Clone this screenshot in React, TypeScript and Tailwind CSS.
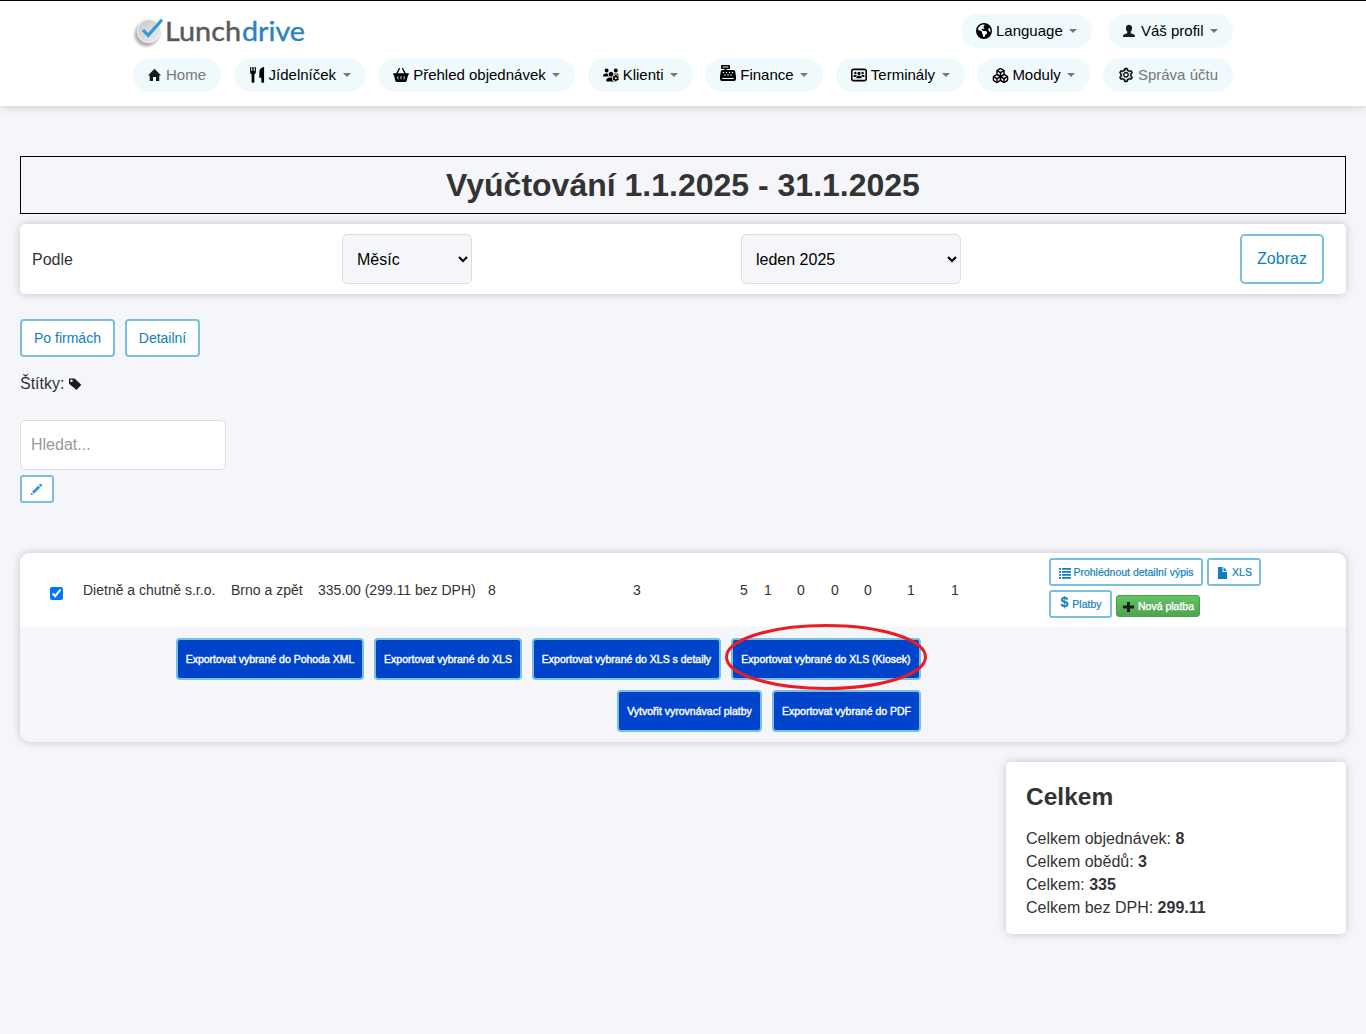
import type { ReactNode } from 'react'
import { Boxes } from 'lucide-react'
import { AiOutlineSetting } from 'react-icons/ai'
import { FaCashRegister, FaEarthAmericas, FaUsersGear, FaUsersRectangle, FaBasketShopping } from 'react-icons/fa6'

type GlyphName = 'home' | 'cutlery' | 'user' | 'tag' | 'pencil' | 'list' | 'file' | 'plus'

// 14x14 grid
const GLYPHS: Record<GlyphName, string> = {
  home: 'M6.500 .8 L13 7.400 H11.300 V13 H8 V9 H5 V13 H1.700 V7.400 H0 Z',
  cutlery:
    'M1 0h1v3.500h.9V0h1.200v3.500H5V0h1v4.200c0 1.200-.6 1.900-1.300 2.200V13c0 .6-.5 1-1.200 1s-1.200-.4-1.200-1V6.400C1.600 6.100 1 5.400 1 4.200z M13.200 0v13c0 .6-.5 1-1.200 1s-1.200-.4-1.200-1V9.500H9V4.600C9 2 10.800 .2 13.200 0z',
  user: 'M7 .8c1.900 0 3.100 1.300 3.100 3.200 0 1.700-.6 2.900-1.300 3.600v1.700l3.200 1.200c.6.200.9.700.9 1.300V13H1.100v-1.200c0-.6.300-1.100.9-1.300l3.200-1.200V7.600C4.500 6.900 3.900 5.700 3.900 4 3.900 2.100 5.100 .8 7 .8z',
  tag: 'M1 1.400h5.600l6.700 6.300-4.700 5.300L1 6.800z M3.500 2.600a1.200 1.200 0 1 0 .01 0z',
  pencil: 'M.6 13.200l.9-3 2.100 2.100z M2.200 9.400l6.700-6.700 2.200 2.200-6.700 6.700z M9.600 2l1-1c.4-.4.900-.4 1.300 0l.9.9c.4.4.4.9 0 1.300l-1 1z',
  list: 'M1 2h2v1.800H1z M4 2h9v1.800H4z M1 5h2v1.800H1z M4 5h9v1.800H4z M1 8h2v1.800H1z M4 8h9v1.800H4z M1 11h2v1.800H1z M4 11h9v1.800H4z',
  file: 'M2 1h4.500v5h4.500v7H2z M7.500 1l3.500 4H7.500z',
  plus: 'M5 2h3v3.500h4v3H8V12H5V8.500H1v-3h4z',
}

function Glyph({ name, className = 'size-3.5' }: { name: GlyphName; className?: string }) {
  return (
    <svg viewBox="0 0 14 14" className={`shrink-0 ${className}`} fill="currentColor" fillRule="evenodd">
      <path d={GLYPHS[name]} />
    </svg>
  )
}

function Logo() {
  return (
    <svg width="176" height="36" viewBox="0 0 176 36" className="block">
      <defs>
        <linearGradient id="disc" x1="0" y1="0" x2="1" y2="1">
          <stop offset="0" stopColor="#c9c9cb" />
          <stop offset="1" stopColor="#ececee" />
        </linearGradient>
        <filter id="soft" x="-30%" y="-30%" width="160%" height="160%">
          <feGaussianBlur stdDeviation="1.500" />
        </filter>
      </defs>
      <circle cx="13.500" cy="20.500" r="11.800" fill="#a8a8ae" filter="url(#soft)" />
      <circle cx="15.600" cy="17.800" r="12.300" fill="#b9b9bd" />
      <circle cx="16" cy="17" r="12" fill="#f0f0f1" />
      <circle cx="16" cy="17" r="11" fill="url(#disc)" />
      <path d="M10 16l5.200 5.300L29 5.800" fill="none" stroke="#2c9bd8" strokeWidth="3.200" />
      <text y="27" fontFamily="Lato, sans-serif" fontSize="27.500" strokeWidth="0.400">
        <tspan x="32" fill="#595959" textLength="76" lengthAdjust="spacingAndGlyphs" stroke="#595959">
          Lunch
        </tspan>
        <tspan x="109" fill="#2b84bf" textLength="63" lengthAdjust="spacingAndGlyphs" stroke="#2b84bf">
          drive
        </tspan>
      </text>
    </svg>
  )
}

interface PillProps {
  icon: ReactNode
  label: string
  width: string
  iconWidth?: string
  caret?: boolean
  muted?: boolean
}

function Pill({ icon, label, width, iconWidth = 'w-5', caret = true, muted = false }: PillProps) {
  return (
    <a className={`flex h-[34px] items-center rounded-full bg-[#f0f9fb] px-[15px] text-[15px] whitespace-nowrap ${width}`}>
      <span className={`flex shrink-0 items-center text-black ${iconWidth}`}>{icon}</span>
      <span className={muted ? 'text-[#777]' : 'text-black'}>{label}</span>
      {caret && (
        <svg width="8" height="4" viewBox="0 0 8 4" className="ml-auto shrink-0">
          <path d="M0 0h8L4 4z" fill="#777" />
        </svg>
      )}
    </a>
  )
}

function Header() {
  return (
    <header className="h-[106px] border-t border-black bg-white shadow-[0_0_10px_rgba(0,0,0,0.2)]">
      <div className="mx-auto w-[1100px] pt-[13px]">
        <div className="flex h-[34px] justify-between">
          <Logo />
          <div className="flex gap-4">
            <Pill width="w-[131px]" icon={<FaEarthAmericas size={16} />} label="Language" />
            <Pill
              width="w-[125px]"
              iconWidth="w-[18px]"
              icon={<Glyph name="user" className="-ml-px size-3.5 text-[#1c1c1c]" />}
              label="Váš profil"
            />
          </div>
        </div>
        <nav className="mt-2.5 flex justify-between">
          <Pill
            width="w-[88px]"
            iconWidth="w-[18px]"
            icon={<Glyph name="home" className="size-3.5 text-[#1c1c1c]" />}
            label="Home"
            caret={false}
            muted
          />
          <Pill width="w-[132px]" icon={<Glyph name="cutlery" className="size-4" />} label="Jídelníček" />
          <Pill width="w-[197px]" icon={<FaBasketShopping size={16} />} label="Přehled objednávek" />
          <Pill width="w-[105px]" icon={<FaUsersGear size={16} />} label="Klienti" />
          <Pill width="w-[118px]" icon={<FaCashRegister size={16} className="-mt-1" />} label="Finance" />
          <Pill width="w-[129px]" icon={<FaUsersRectangle size={16} />} label="Terminály" />
          <Pill width="w-[113px]" icon={<Boxes size={17} strokeWidth={2} />} label="Moduly" />
          <Pill
            width="w-[130px]"
            icon={<AiOutlineSetting size={16} stroke="#000" strokeWidth={30} />}
            label="Správa účtu"
            caret={false}
            muted
          />
        </nav>
      </div>
    </header>
  )
}

function OutlineButton({ children, className }: { children: ReactNode; className: string }) {
  return (
    <button
      type="button"
      className={`flex items-center justify-center border-2 border-[#7ac0de] bg-white whitespace-nowrap text-[#0d80bd] ${className}`}
    >
      {children}
    </button>
  )
}

function ExportButton({ children, width }: { children: ReactNode; width: string }) {
  return (
    <button
      type="button"
      className={`h-[42px] rounded border-2 border-[#7ac0de] bg-[#04c] pt-0.5 text-[10.5px] whitespace-nowrap text-white [-webkit-text-stroke:0.4px_white] ${width}`}
    >
      {children}
    </button>
  )
}

const COUNTS = ['8', '3', '5', '1', '0', '0', '0', '1', '1']

const TOTALS = [
  ['Celkem objednávek', '8'],
  ['Celkem obědů', '3'],
  ['Celkem', '335'],
  ['Celkem bez DPH', '299.11'],
]

export default function App() {
  return (
    <div className="min-h-[1034px] bg-[#f4f6fa] font-['Liberation_Sans',Arial,sans-serif] text-base text-[#333]">
      <Header />
      <main className="px-5 pt-[50px]">
        <h2 className="h-[58px] border border-black text-center text-[32px] leading-[56px] font-bold">
          Vyúčtování 1.1.2025 - 31.1.2025
        </h2>

        <form className="mt-2.5 grid h-[70px] grid-cols-[310px_399px_499px_84px] items-center rounded-[5px] bg-white pl-3 shadow-[0_0_10px_rgba(0,0,0,0.2)]">
          <label className="pt-0.5">Podle</label>
          <select className="h-[50px] w-[130px] rounded-[5px] border border-[#ddd] bg-[#f4f6fa] pr-[9px] pl-2.5 text-black">
            <option>Měsíc</option>
          </select>
          <select className="h-[50px] w-[220px] rounded-[5px] border border-[#ddd] bg-[#f4f6fa] pr-[9px] pl-2.5 text-black">
            <option>leden 2025</option>
          </select>
          <OutlineButton className="h-[50px] w-[84px] rounded-[5px] text-base">Zobraz</OutlineButton>
        </form>

        <div className="mt-[25px] flex gap-2.5">
          <OutlineButton className="h-[38px] w-[95px] rounded text-sm">Po firmách</OutlineButton>
          <OutlineButton className="h-[38px] w-[75px] rounded text-sm">Detailní</OutlineButton>
        </div>

        <div className="mt-[15px] flex h-6 items-center gap-1">
          Štítky: <Glyph name="tag" className="size-3.5 text-[#1c1c1c]" />
        </div>

        <input
          placeholder="Hledat..."
          className="mt-6 block h-[50px] w-[206px] rounded-[5px] border border-[#ddd] bg-white px-2.5 placeholder:text-[#999]"
        />
        <OutlineButton className="mt-[5px] h-7 w-[34px] rounded-[3px] pr-0.5">
          <Glyph name="pencil" className="size-[13px] text-[#2f96e8]" />
        </OutlineButton>

        <section className="mt-[50px] h-[189px] overflow-hidden rounded-[10px] bg-[#f4f6fa] shadow-[0_0_10px_rgba(0,0,0,0.2)]">
          <div className="grid h-[74px] grid-cols-[63px_148px_87px_170px_145px_107px_24px_33px_34px_33px_43px_44px_98px_1fr] items-center bg-white text-sm whitespace-nowrap">
            <input type="checkbox" defaultChecked className="mt-1.5 ml-[30px] size-[13px]" />
            <span>Dietně a chutně s.r.o.</span>
            <span>Brno a zpět</span>
            <span>335.00 (299.11 bez DPH)</span>
            {COUNTS.map((count, i) => (
              <span key={i}>{count}</span>
            ))}
            <div className="flex flex-col gap-1 self-start pt-[5px] text-[10.5px]">
              <div className="flex gap-1">
                <OutlineButton className="h-7 w-[154px] gap-px rounded-[3px] [-webkit-text-stroke:0.2px_#0d80bd]">
                  <Glyph name="list" className="mt-0.5 size-3.5" />
                  Prohlédnout detailní výpis
                </OutlineButton>
                <OutlineButton className="h-7 w-[54px] gap-0.5 rounded-[3px] [-webkit-text-stroke:0.2px_#0d80bd]">
                  <Glyph name="file" className="mt-0.5 size-3.5" />
                  XLS
                </OutlineButton>
              </div>
              <div className="flex gap-1">
                <OutlineButton className="h-7 w-[63px] gap-1 rounded-[3px] pl-px [-webkit-text-stroke:0.2px_#0d80bd]">
                  <span className="-mt-1 text-sm font-bold">$</span>
                  Platby
                </OutlineButton>
                <button
                  type="button"
                  className="mt-[5px] flex h-[22px] w-[84px] items-center justify-center gap-0.5 rounded-[3px] border border-[#4a9e4a] bg-linear-to-b from-[#62c462] to-[#51a351] text-white [-webkit-text-stroke:0.4px_white] text-shadow-[0_-1px_0_rgba(0,0,0,0.25)]"
                >
                  <Glyph name="plus" className="mt-0.5 size-3.5 text-[#1c1c1c]" />
                  Nová platba
                </button>
              </div>
            </div>
          </div>
          <div className="flex w-[901px] flex-col gap-2.5 pt-[11px]">
            <div className="flex justify-end gap-2.5">
              <ExportButton width="w-[188px]">Exportovat vybrané do Pohoda XML</ExportButton>
              <ExportButton width="w-[148px]">Exportovat vybrané do XLS</ExportButton>
              <ExportButton width="w-[189px]">Exportovat vybrané do XLS s detaily</ExportButton>
              <div className="relative">
                <ExportButton width="w-[190px]">Exportovat vybrané do XLS (Kiosek)</ExportButton>
                <svg width="202" height="66" className="pointer-events-none absolute -top-3.5 -left-1.5 max-w-none">
                  <ellipse cx="101" cy="33" rx="99.500" ry="31.500" fill="none" stroke="#ed1c24" strokeWidth="3" />
                </svg>
              </div>
            </div>
            <div className="flex justify-end gap-2.5">
              <ExportButton width="w-[145px]">Vytvořit vyrovnávací platby</ExportButton>
              <ExportButton width="w-[149px]">Exportovat vybrané do PDF</ExportButton>
            </div>
          </div>
        </section>

        <aside className="mt-5 ml-auto h-[172px] w-[340px] rounded-[5px] bg-white px-5 pt-[15px] shadow-[0_0_10px_rgba(0,0,0,0.2)]">
          <h3 className="mb-2.5 text-[24.5px] leading-10 font-bold">Celkem</h3>
          {TOTALS.map(([label, value]) => (
            <p key={label} className="leading-[23px]">
              {label}: <strong>{value}</strong>
            </p>
          ))}
        </aside>
      </main>
    </div>
  )
}
